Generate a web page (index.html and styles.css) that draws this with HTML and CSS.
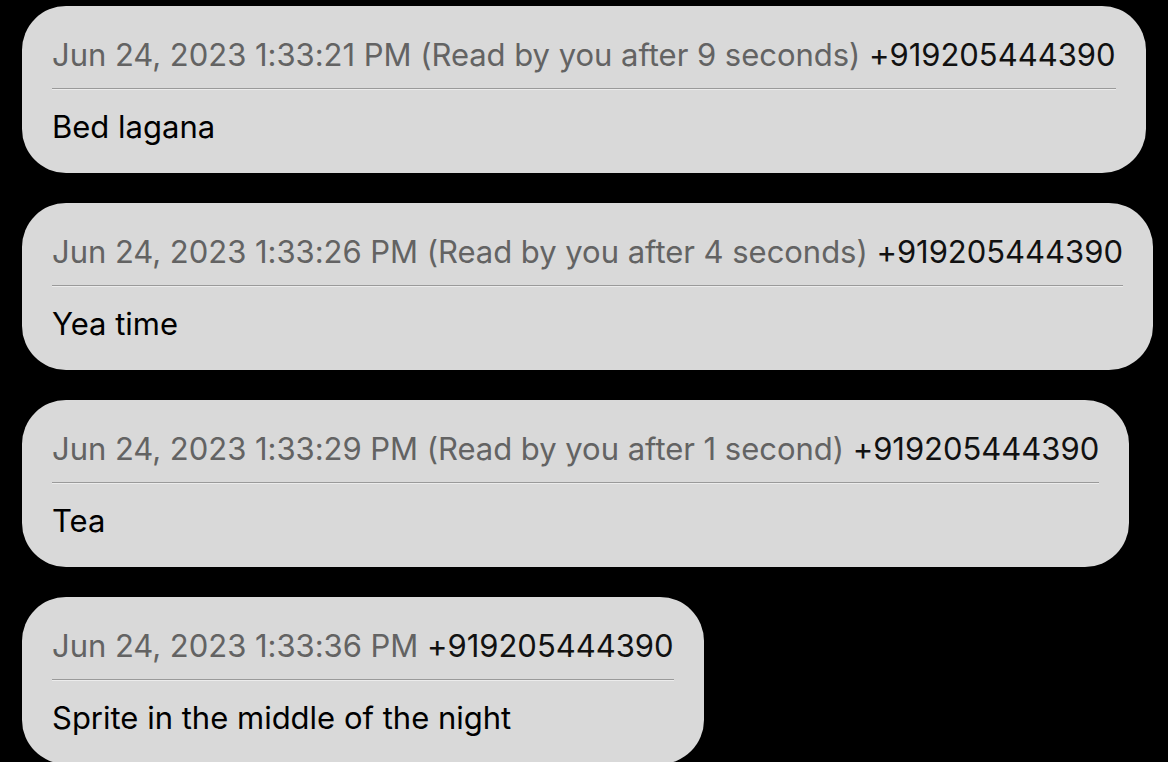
FILE: index.html
```html
<!DOCTYPE html>
<html>
<head>
<meta charset="utf-8">
<link rel="stylesheet" href="styles.css">
</head>
<body>
<div class="thread">
  <div class="bubble">
    <div class="meta"><span class="time">Jun 24, 2023 1:33:21 PM (Read by you after 9 seconds)</span> <span class="sender">+919205444390</span></div>
    <div class="sep"></div>
    <div class="text">Bed lagana</div>
  </div>
  <div class="bubble">
    <div class="meta"><span class="time">Jun 24, 2023 1:33:26 PM (Read by you after 4 seconds)</span> <span class="sender">+919205444390</span></div>
    <div class="sep"></div>
    <div class="text">Yea time</div>
  </div>
  <div class="bubble">
    <div class="meta"><span class="time">Jun 24, 2023 1:33:29 PM (Read by you after 1 second)</span> <span class="sender">+919205444390</span></div>
    <div class="sep"></div>
    <div class="text">Tea</div>
  </div>
  <div class="bubble">
    <div class="meta"><span class="time">Jun 24, 2023 1:33:36 PM</span> <span class="sender">+919205444390</span></div>
    <div class="sep"></div>
    <div class="text">Sprite in the middle of the night</div>
  </div>
</div>
</body>
</html>
```
FILE: styles.css
```css
html, body {
  margin: 0;
  padding: 0;
  background: #000;
  height: 100%;
  overflow: hidden;
}
body {
  font-family: Inter, "Noto Sans", sans-serif;
}
.thread {
  display: flex;
  flex-direction: column;
  align-items: flex-start;
  gap: 30px;
  padding: 6px 0 0 22px;
}
.bubble {
  background: #d9d9d9;
  border-radius: 44px;
  padding: 29px 30px 26px 30px;
  white-space: nowrap;
}
.meta {
  font-size: 31px;
  line-height: 40px;
  letter-spacing: -0.03px;
  color: #111;
}
.time {
  color: #636363;
}
.sep {
  height: 1px;
  background: #9a9a9a;
  border-bottom: 1px solid #ececec;
  margin: 13px 0 17px;
}
.text {
  font-size: 31px;
  line-height: 40px;
  color: #000;
}
```
